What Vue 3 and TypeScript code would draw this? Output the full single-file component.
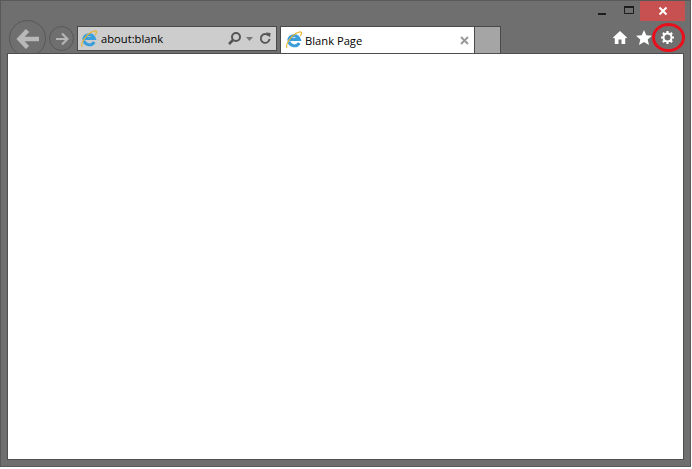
<script setup lang="ts">
const title = 'Blank Page'
const address = 'about:blank'
</script>

<template>
  <div class="window">
    <div class="controls">
      <svg class="ctl" width="12" height="12" viewBox="0 0 12 12"><rect x="1" y="8" width="8" height="2" fill="#1c1c1c"/></svg>
      <svg class="ctl restore" width="12" height="12" viewBox="0 0 12 12"><path d="M1.500 2.500h9v7h-9z" fill="none" stroke="#1c1c1c"/><rect x="1" y="2" width="10" height="2" fill="#1c1c1c"/></svg>
      <div class="close">
        <svg width="10" height="10" viewBox="0 0 10 10"><path d="M1.500 1.500l7 7M8.500 1.500l-7 7" stroke="#fff" stroke-width="2"/></svg>
      </div>
    </div>
    <div class="toolbar">
      <div class="nav back">
        <svg width="24" height="22" viewBox="0 0 24 22"><path d="M11.500 2.500L3.500 11l8 8.500M4 11H23" fill="none" stroke="#b8b8b8" stroke-width="4.500"/></svg>
      </div>
      <div class="nav forward">
        <svg width="14" height="14" viewBox="0 0 14 14"><path d="M7 1.500L12.500 7 7 12.500M12 7H1" fill="none" stroke="#b4b4b4" stroke-width="2.200"/></svg>
      </div>
      <div class="address">
        <svg class="ie" width="17" height="18" viewBox="1 1 15 17">
          <path d="M3 10.400a5.200 5.200 0 0 1 10.100-1.400H4.500M13 12.300a5.300 5.300 0 0 1-9.800-1.400" fill="none" stroke="#3b9fdb" stroke-width="2.800"/>
          <path d="M1.500 16.800C-.5 14 5 6 10 3.200c2.600-1.400 4.600-1.800 5-.8.300.8-.2 2-1 3.200" fill="none" stroke="#e9b32a" stroke-width="1.100"/>
        </svg>
        <span class="url">{{ address }}</span>
        <svg class="search" width="15" height="15" viewBox="0 0 15 15"><circle cx="9" cy="6" r="4" fill="none" stroke="#555" stroke-width="2"/><path d="M6 9l-4 4" stroke="#555" stroke-width="2.500"/></svg>
        <svg class="caret" width="7" height="4" viewBox="0 0 7 4"><path d="M0 0h7L3.500 4z" fill="#777"/></svg>
        <svg class="reload" width="12" height="13" viewBox="0 0 13 13"><path d="M10.500 3.500a4.800 4.800 0 1 0 1 3.500" fill="none" stroke="#555" stroke-width="2"/><path d="M7.500 0l5 .5-.5 5z" fill="#555"/></svg>
      </div>
      <div class="tab">
        <svg class="ie" width="17" height="18" viewBox="1 1 15 17">
          <path d="M3 10.400a5.200 5.200 0 0 1 10.100-1.400H4.500M13 12.300a5.300 5.300 0 0 1-9.800-1.400" fill="none" stroke="#3b9fdb" stroke-width="2.800"/>
          <path d="M1.500 16.800C-.5 14 5 6 10 3.200c2.600-1.400 4.600-1.800 5-.8.300.8-.2 2-1 3.200" fill="none" stroke="#e9b32a" stroke-width="1.100"/>
        </svg>
        <span class="tab-title">{{ title }}</span>
        <svg class="tab-x" width="9" height="9" viewBox="0 0 9 9"><path d="M1 1l7 7M8 1L1 8" stroke="#9a9a9a" stroke-width="2"/></svg>
      </div>
      <div class="newtab"></div>
      <div class="tools">
        <svg class="home" width="14" height="13" viewBox="0 0 14 13"><path d="M7 0l7 6.500-1 1-.8-.7V13H8.500V8.500h-3V13H1.800V6.800l-.8.700-1-1z" fill="#fff"/></svg>
        <svg class="star" width="16" height="15" viewBox="0 0 16 15"><path d="M8 0l2.300 5.200 5.700.5-4.300 3.700 1.300 5.600L8 12l-5 3 1.300-5.600L0 5.700l5.700-.5z" fill="#fff"/></svg>
        <div class="gear-ring">
          <svg class="gear" width="15" height="15" viewBox="0 0 15 15">
            <circle cx="7.500" cy="7.500" r="4" fill="none" stroke="#fff" stroke-width="2"/>
            <path d="M7.500 1v2M7.500 12v2M1 7.500h2M12 7.500h2M2.900 2.900l1.500 1.500M10.600 10.600l1.500 1.500M12.100 2.900l-1.500 1.500M4.400 10.600l-1.500 1.500" stroke="#fff" stroke-width="2.200"/>
          </svg>
        </div>
      </div>
    </div>
    <div class="content"></div>
  </div>
</template>

<style scoped>
.window {
  box-sizing: border-box;
  width: 691px;
  height: 467px;
  border: 1px solid #595959;
  background: #6f6f6f;
  display: flex;
  flex-direction: column;
  font-family: "Open Sans", "Noto Sans", sans-serif;
  overflow: hidden;
}
.controls {
  height: 19px;
  flex: none;
  display: flex;
  justify-content: flex-end;
  align-items: flex-start;
  padding-right: 5px;
}
.ctl {
  margin-top: 4px;
  margin-right: 14px;
}
.restore {
  margin-top: 3px;
  margin-right: 5px;
}
.close {
  width: 45px;
  height: 20px;
  background: #c75050;
  display: flex;
  align-items: center;
  justify-content: center;
  position: relative;
  z-index: 1;
}
.toolbar {
  height: 33px;
  flex: none;
  display: flex;
  align-items: flex-start;
  padding-left: 8px;
}
.nav {
  box-sizing: border-box;
  border: 1px solid #585858;
  border-radius: 50%;
  display: flex;
  align-items: center;
  justify-content: center;
  flex: none;
}
.back {
  width: 37px;
  height: 37px;
}
.forward {
  width: 25px;
  height: 25px;
  margin: 6px 3px 0 3px;
}
.address {
  box-sizing: border-box;
  width: 200px;
  height: 25px;
  margin-top: 6px;
  border: 1px solid #4a4a4a;
  background: #cdcdcd;
  display: flex;
  align-items: center;
  padding: 0 5px 0 3px;
  flex: none;
}
.ie {
  flex: none;
}
.url {
  margin-left: 3px;
  font-size: 11.2px;
  color: #000;
  flex: 1;
}
.search {
  margin-right: 4px;
}
.caret {
  margin-right: 6px;
}
.tab {
  box-sizing: border-box;
  width: 195px;
  height: 27px;
  margin: 6px 0 0 3px;
  border: 1px solid #4a4a4a;
  border-bottom: none;
  background: #fff;
  display: flex;
  align-items: center;
  padding: 0 5px 0 5px;
  flex: none;
}
.tab-title {
  margin-left: 2px;
  font-size: 11.2px;
  color: #000;
  flex: 1;
}
.newtab {
  box-sizing: border-box;
  width: 26px;
  height: 27px;
  margin-top: 6px;
  border: 1px solid #4a4a4a;
  border-left: none;
  border-bottom: none;
  background: #a5a5a5;
  flex: none;
}
.tools {
  margin-left: auto;
  margin-right: 5px;
  display: flex;
  align-items: center;
  height: 35px;
}
.home {
  margin-right: 9px;
}
.gear-ring {
  box-sizing: border-box;
  width: 33px;
  height: 29px;
  border: 3px solid #e8101c;
  border-radius: 50%;
  display: flex;
  align-items: center;
  justify-content: center;
  padding-right: 2px;
}
.content {
  flex: 1;
  margin: 0 6px 6px 6px;
  background: #fff;
  border: 1px solid #4f4f4f;
  position: relative;
  z-index: 1;
}
</style>
